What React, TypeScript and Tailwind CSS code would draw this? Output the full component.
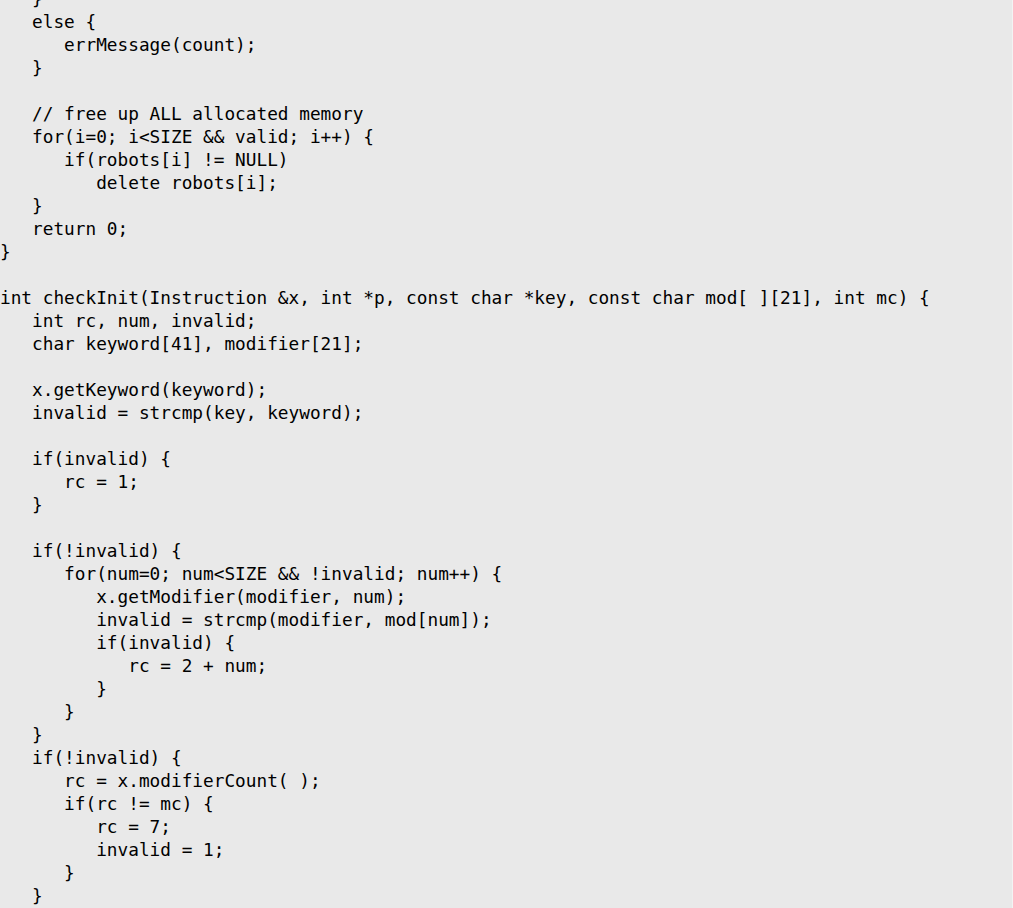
import React from "react";

const codeLines: string[] = [
  "   }",
  "   else {",
  "      errMessage(count);",
  "   }",
  "",
  "   // free up ALL allocated memory",
  "   for(i=0; i<SIZE && valid; i++) {",
  "      if(robots[i] != NULL)",
  "         delete robots[i];",
  "   }",
  "   return 0;",
  "}",
  "",
  "int checkInit(Instruction &x, int *p, const char *key, const char mod[ ][21], int mc) {",
  "   int rc, num, invalid;",
  "   char keyword[41], modifier[21];",
  "",
  "   x.getKeyword(keyword);",
  "   invalid = strcmp(key, keyword);",
  "",
  "   if(invalid) {",
  "      rc = 1;",
  "   }",
  "",
  "   if(!invalid) {",
  "      for(num=0; num<SIZE && !invalid; num++) {",
  "         x.getModifier(modifier, num);",
  "         invalid = strcmp(modifier, mod[num]);",
  "         if(invalid) {",
  "            rc = 2 + num;",
  "         }",
  "      }",
  "   }",
  "   if(!invalid) {",
  "      rc = x.modifierCount( );",
  "      if(rc != mc) {",
  "         rc = 7;",
  "         invalid = 1;",
  "      }",
  "   }",
];

export default function App() {
  return (
    <div className="h-[908px] w-full overflow-hidden bg-[#e9e9e9] border-r border-[#f3f3f3]">
      <pre className="-mt-[12px] font-['DejaVu_Sans_Mono',monospace] text-[17.75px] leading-[23px] text-black whitespace-pre">
        {codeLines.map((line, i) => (
          <div key={i} className="h-[23px]">
            {line}
          </div>
        ))}
      </pre>
    </div>
  );
}
